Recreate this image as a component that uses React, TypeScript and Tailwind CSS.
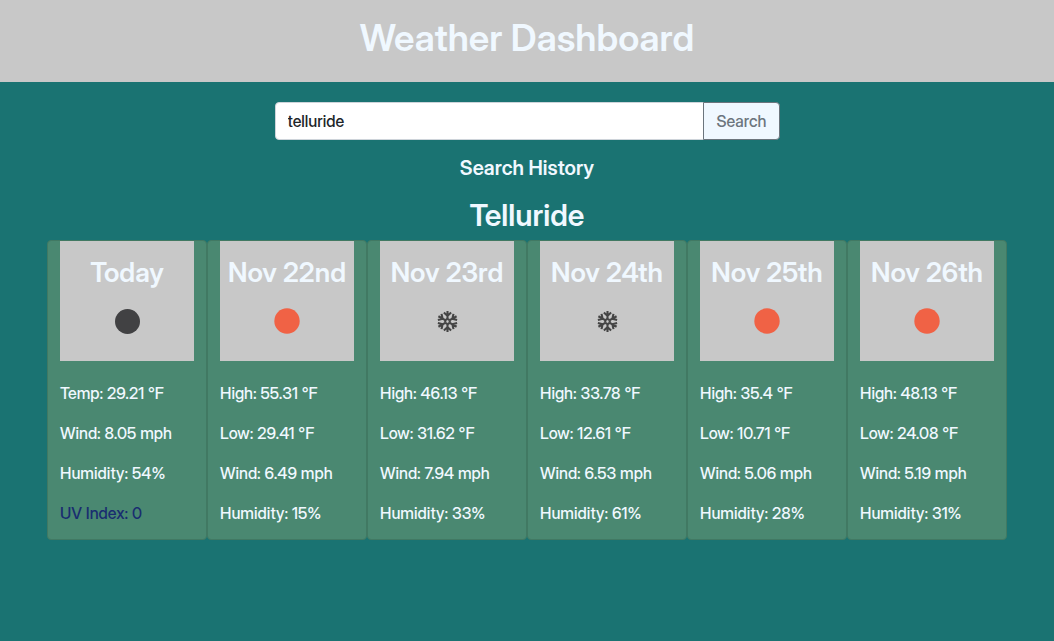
const days = [
  { title: "Today", icon: "moon", rows: ["Temp: 29.21 °F", "Wind: 8.05 mph", "Humidity: 54%", "UV Index: 0"] },
  { title: "Nov 22nd", icon: "sun", rows: ["High: 55.31 °F", "Low: 29.41 °F", "Wind: 6.49 mph", "Humidity: 15%"] },
  { title: "Nov 23rd", icon: "snow", rows: ["High: 46.13 °F", "Low: 31.62 °F", "Wind: 7.94 mph", "Humidity: 33%"] },
  { title: "Nov 24th", icon: "snow", rows: ["High: 33.78 °F", "Low: 12.61 °F", "Wind: 6.53 mph", "Humidity: 61%"] },
  { title: "Nov 25th", icon: "sun", rows: ["High: 35.4 °F", "Low: 10.71 °F", "Wind: 5.06 mph", "Humidity: 28%"] },
  { title: "Nov 26th", icon: "sun", rows: ["High: 48.13 °F", "Low: 24.08 °F", "Wind: 5.19 mph", "Humidity: 31%"] },
];

const arms = [0, 60, 120, 180, 240, 300];

function WeatherIcon({ kind }: { kind: string }) {
  if (kind === "snow") {
    return (
      <svg viewBox="-25.5 -25.5 50 50" className="size-[50px]" fill="none" stroke="#454545" strokeWidth="2.1" aria-hidden="true">
        {arms.map((a) => (
          <path key={a} transform={`rotate(${a})`} d="M0 -2.6V-10.5M-3.6 -9L0 -5.6L3.6 -9M0 -2.6L2.25 -1.3" />
        ))}
      </svg>
    );
  }
  if (kind === "moon") {
    return (
      <svg viewBox="-25.5 -25.5 50 50" className="size-[50px]" aria-hidden="true">
        <circle r="12.5" fill="#414143" />
      </svg>
    );
  }
  return (
    <svg viewBox="-25 -25 50 50" className="size-[50px]" aria-hidden="true">
      <circle r="12.7" fill="#f06245" />
    </svg>
  );
}

export default function App() {
  return (
    <div className="min-h-screen bg-[#1a7372] font-['Inter_Display','Inter','Liberation_Sans',sans-serif] text-base text-[#f0f8ff]">
      <header className="bg-[#c8c8c8] px-4 pt-[15px] pb-[21px] text-center">
        <h1 className="text-[37px] leading-[46px] font-semibold">Weather Dashboard</h1>
      </header>
      <main className="px-[47px] pt-5">
        <form className="mx-auto flex w-full max-w-[505px]" onSubmit={(e) => e.preventDefault()}>
          <input
            aria-label="City"
            defaultValue="telluride"
            className="h-[38px] min-w-0 flex-1 rounded-l border border-[#ced4da] bg-white px-3 font-medium text-[#212529]"
          />
          <button className="-ml-px h-[38px] rounded-r border border-[#6c757d] bg-[#f0f8ff] px-3 font-medium text-[#6c757d]">Search</button>
        </form>
        <h2 className="mt-4 text-center text-xl leading-6 font-semibold">Search History</h2>
        <h2 className="mt-[17px] mb-[7px] text-center text-[30px] leading-9 font-semibold">Telluride</h2>
        <section className="grid grid-cols-6">
          {days.map((day) => (
            <article key={day.title} className="rounded border border-[#417963] bg-[#4a8871] px-3 pb-3.5">
              <div className="flex h-[120px] flex-col items-center bg-[#c8c8c8] pt-4">
                <h3 className="text-[27px] leading-8 font-semibold whitespace-nowrap">{day.title}</h3>
                <div className="mt-[7px]">
                  <WeatherIcon kind={day.icon} />
                </div>
              </div>
              <div className="mt-5 flex flex-col gap-4 font-medium">
                {day.rows.map((row) => (
                  <p key={row} className={row.startsWith("UV") ? "leading-6 text-[#192d70]" : "leading-6"}>{row}</p>
                ))}
              </div>
            </article>
          ))}
        </section>
      </main>
    </div>
  );
}
